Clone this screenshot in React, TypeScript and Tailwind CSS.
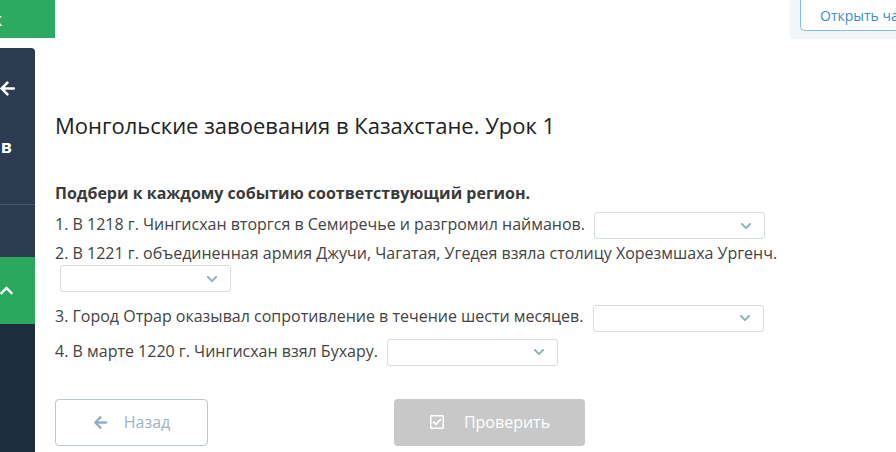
import { FaArrowLeft, FaRegCheckSquare, FaChevronDown, FaChevronUp } from "react-icons/fa";

const items = [
  { text: "1. В 1218 г. Чингисхан вторгся в Семиречье и разгромил найманов.", mb: "mb-[2px]" },
  { text: "2. В 1221 г. объединенная армия Джучи, Чагатая, Угедея взяла столицу Хорезмшаха Ургенч.", mb: "mb-[12px]" },
  { text: "3. Город Отрар оказывал сопротивление в течение шести месяцев.", mb: "mb-[7px]" },
  { text: "4. В марте 1220 г. Чингисхан взял Бухару.", mb: "mb-0" },
];

function Select() {
  return (
    <span className="ml-[5px] inline-flex h-[27px] w-[171px] items-center justify-end rounded-[3px] border border-[#d3dde2] bg-white pr-[12px] align-middle">
      <FaChevronDown className="h-[12px] w-[12px] text-[#8fb1b8]" />
    </span>
  );
}

export default function App() {
  return (
    <div
      className="relative h-[452px] w-[896px] overflow-hidden bg-white text-[#333]"
      style={{ fontFamily: '"Open Sans", "Liberation Sans", sans-serif' }}
    >
      {/* top bar */}
      <div className="flex h-[48px] items-start justify-between">
        <div className="flex h-[38px] w-[55px] items-center overflow-hidden bg-[#2daa62]">
          <span className="-ml-[7px] text-[18px] font-normal text-white">к</span>
        </div>
        <div className="h-[38px] w-[106px] rounded-bl-[4px] bg-[#f3f6f9] pl-[10px] shadow-[0_1px_2px_rgba(0,0,0,0.06)]">
          <div className="flex h-[31px] items-center overflow-hidden whitespace-nowrap rounded-bl-[5px] border border-t-0 border-r-0 border-[#86bde0] bg-white pl-[19px] text-[14px] text-[#3b8fd3]">
            Открыть чат
          </div>
        </div>
      </div>

      <div className="flex h-[404px]">
        {/* sidebar */}
        <div className="flex w-[35px] flex-col overflow-hidden rounded-tr-[4px] bg-[#2c3b4f]">
          <div className="flex h-[80px] items-center justify-end pr-[19px] text-white">
            <FaArrowLeft className="h-[17px] w-[17px] shrink-0" />
          </div>
          <div className="flex h-[36px] items-center justify-end pr-[23px] text-[18px] font-bold text-white">
            в
          </div>
          <div className="h-[40px]" />
          <div className="h-px bg-[#47566b]" />
          <div className="h-[52px]" />
          <div className="flex h-[67px] items-center justify-end bg-[#2aa85e] pr-[21px] text-white">
            <FaChevronUp className="h-[15px] w-[15px] shrink-0" />
          </div>
          <div className="flex-1 bg-[#1e2c3f]" />
        </div>

        {/* content */}
        <div className="flex-1 pl-[20px] pr-[40px]">
          <h1 className="mt-[62px] text-[22px] leading-[30px] text-[#222]">
            Монгольские завоевания в Казахстане. Урок 1
          </h1>
          <p className="mt-[42px] text-[16px] font-bold leading-[22px] text-[#3a3a3a]">
            Подбери к каждому событию соответствующий регион.
          </p>
          <div className="mt-[8px] text-[16px] leading-[24px] text-[#444]">
            {items.map((it) => (
              <p key={it.text} className={it.mb}>
                {it.text} <Select />
              </p>
            ))}
          </div>
          <div className="mt-[33px] flex gap-[186px]">
            <button className="flex h-[47px] w-[153px] items-center justify-center gap-[16px] rounded-[4px] border border-[#b9c6cf] bg-white text-[16px] text-[#9fb3c2]">
              <FaArrowLeft className="h-[15px] w-[15px] text-[#8fb0c6]" />
              Назад
            </button>
            <button className="flex h-[47px] w-[191px] items-center justify-center gap-[19px] rounded-[4px] bg-[#c8c8c8] text-[16px] text-white">
              <FaRegCheckSquare className="h-[16px] w-[16px]" />
              Проверить
            </button>
          </div>
        </div>
      </div>
    </div>
  );
}
